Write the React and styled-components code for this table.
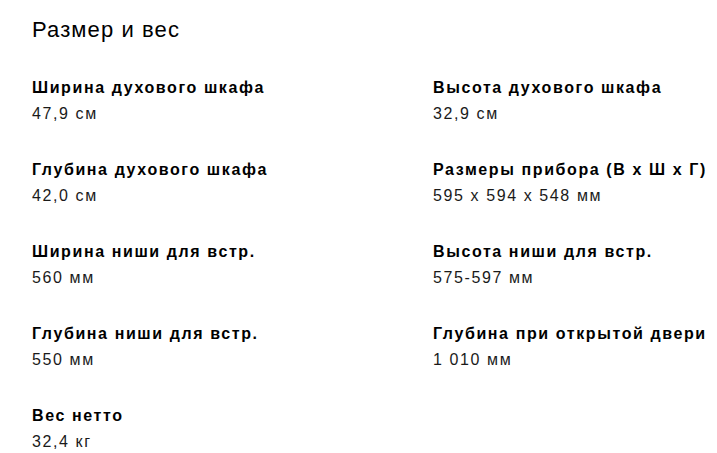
import React from 'react'
import styled, { createGlobalStyle } from 'styled-components'

const GlobalStyle = createGlobalStyle`
  body {
    margin: 0;
    background: #fff;
    font-family: "Liberation Sans", Arial, sans-serif;
    color: #000;
  }
`

const specs = [
  { label: 'Ширина духового шкафа', value: '47,9 см' },
  { label: 'Высота духового шкафа', value: '32,9 см' },
  { label: 'Глубина духового шкафа', value: '42,0 см' },
  { label: 'Размеры прибора (В х Ш х Г)', value: '595 x 594 x 548 мм' },
  { label: 'Ширина ниши для встр.', value: '560 мм' },
  { label: 'Высота ниши для встр.', value: '575-597 мм' },
  { label: 'Глубина ниши для встр.', value: '550 мм' },
  { label: 'Глубина при открытой двери', value: '1 010 мм' },
  { label: 'Вес нетто', value: '32,4 кг' },
]

function App() {
  return (
    <Section>
      <GlobalStyle />
      <Title>Размер и вес</Title>
      <SpecGrid>
        {specs.map((item) => (
          <Spec key={item.label}>
            <Label>{item.label}</Label>
            <Value>{item.value}</Value>
          </Spec>
        ))}
      </SpecGrid>
    </Section>
  )
}

const Section = styled.section`
  padding: 16px 0 0 32px;
`

const Title = styled.h2`
  margin: 0;
  font-size: 22px;
  font-weight: 400;
  line-height: 28px;
  letter-spacing: 1.1px;
`

const SpecGrid = styled.div`
  margin-top: 33px;
  display: grid;
  grid-template-columns: 401px 1fr;
  row-gap: 34px;
`

const Spec = styled.div`
  display: flex;
  flex-direction: column;
  gap: 4px;
`

const Label = styled.div`
  font-size: 16px;
  font-weight: 700;
  line-height: 22px;
  letter-spacing: 1.6px;
  white-space: nowrap;
`

const Value = styled.div`
  font-size: 16px;
  line-height: 22px;
  letter-spacing: 1.6px;
  color: #1a1a1a;
`

export default App
